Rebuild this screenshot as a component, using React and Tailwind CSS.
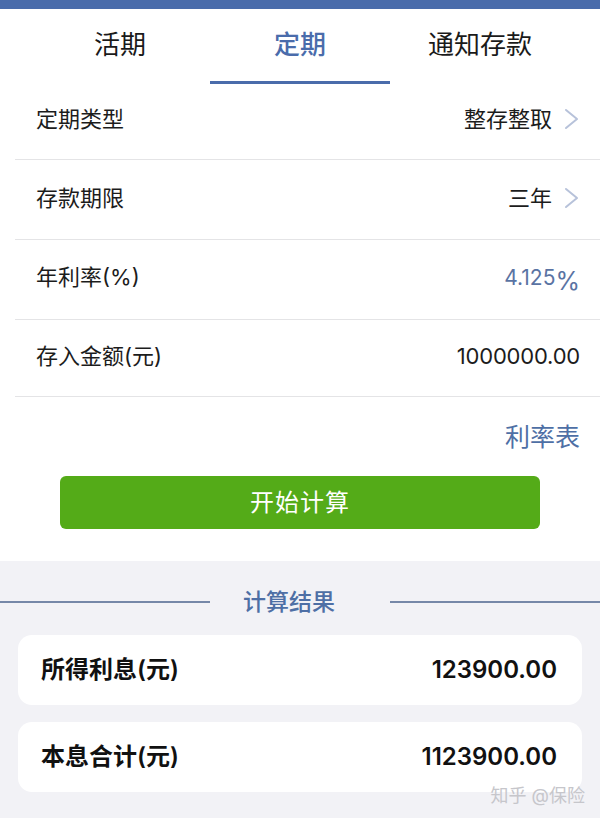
const FONT = "font-['Inter','Noto_Sans_CJK_SC',sans-serif]";

const TABS = ['活期', '定期', '通知存款'];

function Chevron() {
  return (
    <svg width="18" height="22" viewBox="0 0 18 22" className="ml-[10px] shrink-0">
      <path d="M4 2 L15 11 L4 20" fill="none" stroke="#b7c2da" strokeWidth="2" strokeLinecap="round" strokeLinejoin="round" />
    </svg>
  );
}

function Row({ label, children, className = '' }) {
  return (
    <div className={`flex items-center justify-between ml-[15px] pl-[21px] pr-[20px] border-b border-[#e4e4e6] ${className}`}>
      <span className="text-[22px] text-[#1c1c1c]">{label}</span>
      <div className="flex items-center">{children}</div>
    </div>
  );
}

function ResultCard({ label, value }) {
  return (
    <div className="flex items-center justify-between h-[70px] bg-white rounded-[14px] pl-[23px] pr-[25px]">
      <span className="text-[24px] font-semibold text-[#111]">{label}</span>
      <span className="text-[24px] font-semibold text-[#111]">{value}</span>
    </div>
  );
}

export default function App() {
  return (
    <div className={`w-[600px] h-[818px] bg-white flex flex-col overflow-hidden ${FONT}`}>
      <div className="h-[9px] bg-[#4a6cab]" />

      {/* Tabs */}
      <div className="grid grid-cols-3 h-[76px] px-[30px]">
        {TABS.map((t, i) => (
          <div key={t} className="flex flex-col items-center pt-[20px]">
            <span className={`text-[26px] leading-[32px] ${i === 1 ? 'text-[#4a6cab] font-medium' : 'text-[#1a1a1a]'}`}>{t}</span>
            <div className={`mt-[20px] h-[3px] w-[180px] ${i === 1 ? 'bg-[#4a6cab]' : 'bg-transparent'}`} />
          </div>
        ))}
      </div>

      {/* Form rows */}
      <Row label="定期类型" className="h-[75px] pb-[6px]">
        <span className="text-[22px] text-[#1c1c1c]">整存整取</span>
        <Chevron />
      </Row>
      <Row label="存款期限" className="h-[80px] pb-[3px]">
        <span className="text-[22px] text-[#1c1c1c]">三年</span>
        <Chevron />
      </Row>
      <Row label="年利率(%)" className="h-[80px] pb-[4px]">
        <span className="text-[21px] text-[#5a73a3]">4.125</span>
        <span className="text-[25px] text-[#5a73a3] relative top-[4px]">%</span>
      </Row>
      <Row label="存入金额(元)" className="h-[77px] pb-[4px]">
        <span className="text-[22px] text-[#1c1c1c] tracking-[-0.2px]">1000000.00</span>
      </Row>

      <div className="flex justify-end pr-[20px] pt-[25px]">
        <span className="text-[25px] text-[#4e6fa5] leading-[30px]">利率表</span>
      </div>

      <div className="px-[60px] pt-[24px] pb-[32px]">
        <button className="w-full h-[53px] rounded-[6px] bg-[#54ab18] text-white text-[24px] tracking-[1px]">
          开始计算
        </button>
      </div>

      {/* Results */}
      <div className="flex-1 bg-[#f2f2f6] relative">
        <div className="flex items-center h-[74px] pt-[8px]">
          <div className="w-[210px] h-[2px] bg-[#7688a8]" />
          <span className="flex-1 text-center pr-[22px] text-[23px] font-medium text-[#4e6fa5]">计算结果</span>
          <div className="w-[210px] h-[2px] bg-[#7688a8]" />
        </div>
        <div className="flex flex-col gap-[17px] px-[18px]">
          <ResultCard label="所得利息(元)" value="123900.00" />
          <ResultCard label="本息合计(元)" value="1123900.00" />
        </div>
        <span className="absolute right-[15px] top-[221px] text-[18px] text-[#c6c6cb]">知乎 @保险</span>
      </div>
    </div>
  );
}
